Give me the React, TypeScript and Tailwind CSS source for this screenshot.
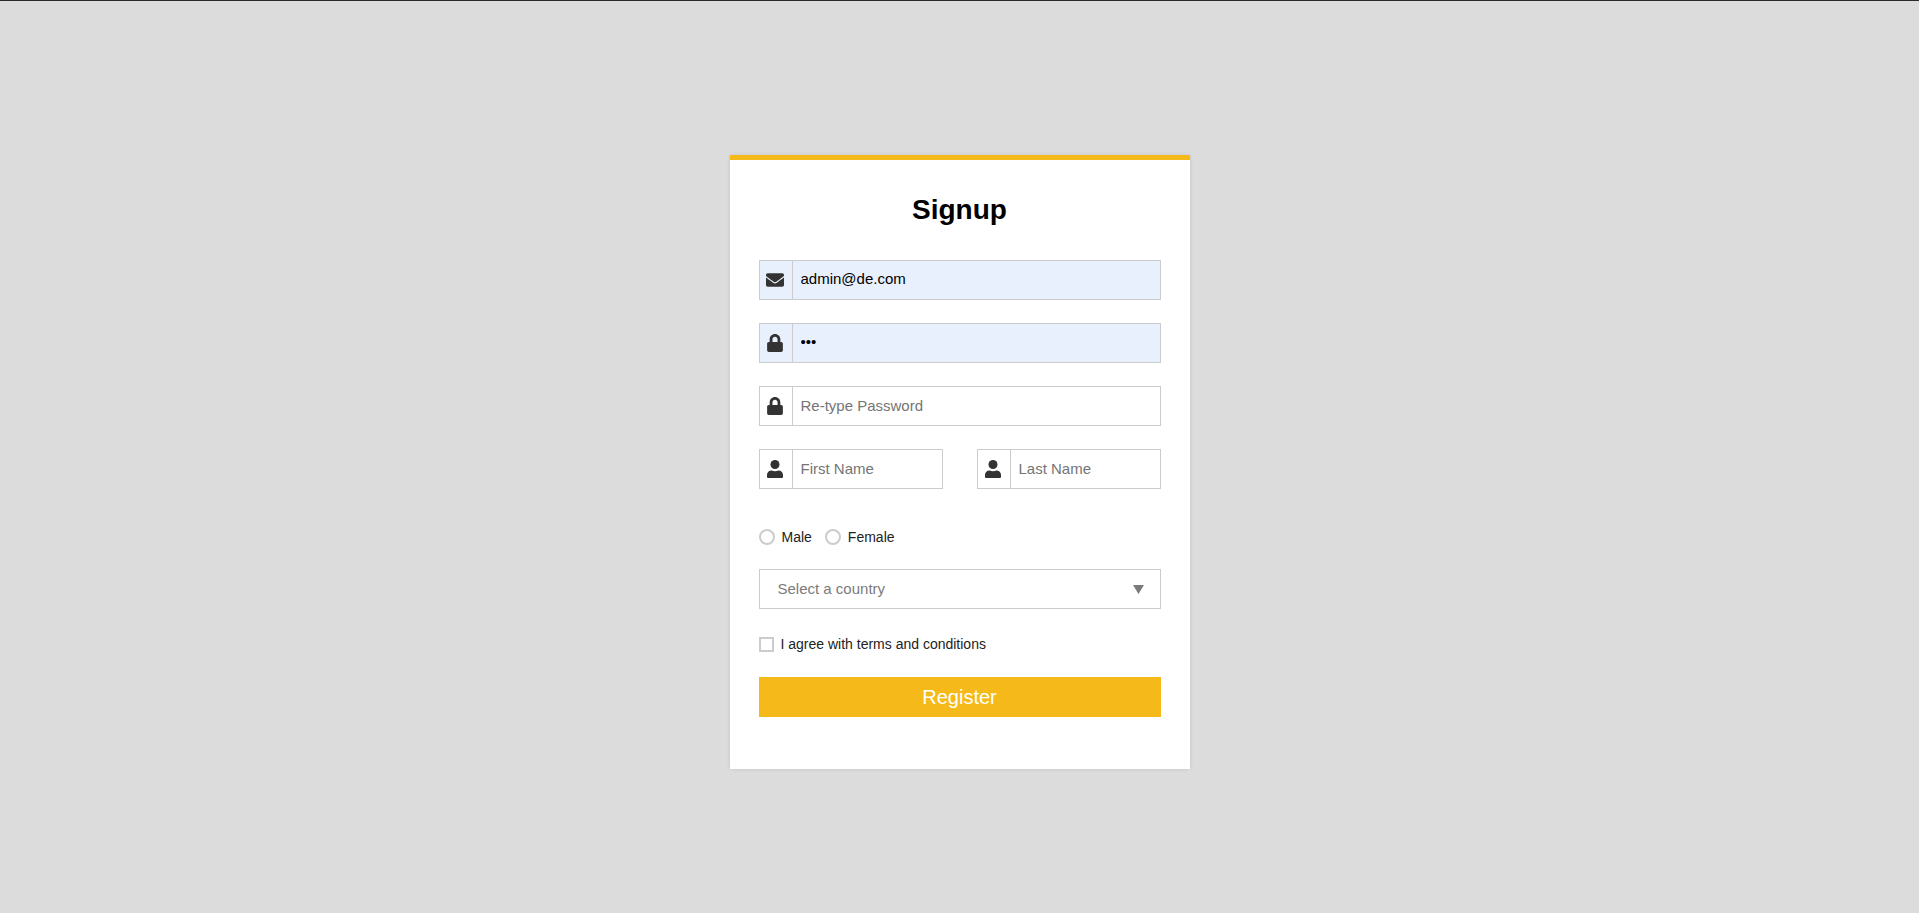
import type { InputHTMLAttributes, ReactNode } from "react";
import { FaEnvelope, FaLock } from "react-icons/fa";

function UserIcon() {
  return (
    <svg viewBox="0 0 16 18" className="h-[18px] w-4" fill="currentColor" aria-hidden="true">
      <circle cx="8" cy="4.5" r="4.5" />
      <path d="M4.600 10.400c1 .5 2.200.8 3.400.8s2.400-.3 3.400-.8c2.700 0 4.600 1.900 4.600 4.400v1.900c0 .8-.5 1.300-1.300 1.300H1.300C.5 18 0 17.500 0 16.700v-1.900c0-2.500 1.900-4.400 4.600-4.400z" />
    </svg>
  );
}

type FieldProps = InputHTMLAttributes<HTMLInputElement> & {
  label: string;
  icon: ReactNode;
  filled?: boolean;
};

function Field({ label, icon, filled = false, ...input }: FieldProps) {
  return (
    <label className={`flex h-10 min-w-0 border border-[#cccccc] ${filled ? "bg-[#e8f0fe]" : "bg-white"}`}>
      <span className="flex w-[33px] shrink-0 items-center justify-center border-r border-[#cccccc] pr-px text-[18px] text-[#333333]">
        {icon}
      </span>
      <input
        aria-label={label}
        className={`w-full min-w-0 bg-transparent px-2 text-[15px] text-black outline-none placeholder:text-[#757575] ${filled ? "pb-px" : "pt-px"}`}
        {...input}
      />
    </label>
  );
}

export default function App() {
  return (
    <main className="flex min-h-screen flex-col items-center border-t border-[#2b272b] bg-[#dcdcdc] px-4 pt-[154px] pb-10 font-['Liberation_Sans',Arial,sans-serif]">
      <form
        className="w-full max-w-[460px] border-t-[5px] border-[#f5ba1a] bg-white px-[29px] pt-8 pb-[52px] shadow-[0_0_4px_rgba(0,0,0,0.1)]"
        onSubmit={(event) => event.preventDefault()}
      >
        <h1 className="text-center text-[28px] leading-9 font-bold text-black">Signup</h1>

        <div className="mt-8 flex flex-col gap-[23px]">
          <Field label="Email" type="email" defaultValue="admin@de.com" icon={<FaEnvelope />} filled />
          <Field label="Password" type="password" defaultValue="123" icon={<FaLock />} filled />
          <Field label="Re-type Password" type="password" placeholder="Re-type Password" icon={<FaLock />} />
          <div className="grid grid-cols-2 gap-[34px]">
            <Field label="First Name" type="text" placeholder="First Name" icon={<UserIcon />} />
            <Field label="Last Name" type="text" placeholder="Last Name" icon={<UserIcon />} />
          </div>
        </div>

        <fieldset className="mt-10 flex h-4 items-center gap-[13px] text-[14px] leading-4 text-[#222222]">
          {["Male", "Female"].map((gender) => (
            <label key={gender} className="flex items-center gap-[7px]">
              <input
                type="radio"
                name="gender"
                className="size-4 appearance-none rounded-full border-2 border-[#cccccc] checked:bg-[#f5ba1a]"
              />
              <span className="pb-px">{gender}</span>
            </label>
          ))}
        </fieldset>

        <div className="mt-6 grid h-10 items-center border border-[#cccccc]">
          <select
            aria-label="Country"
            className="col-start-1 row-start-1 h-full w-full appearance-none bg-transparent px-[18px] pt-px text-[15px] text-[#7b7b7b] outline-none"
          >
            <option>Select a country</option>
          </select>
          <svg
            viewBox="0 0 11 9"
            className="pointer-events-none col-start-1 row-start-1 mr-4 h-[9px] w-[11px] justify-self-end"
            fill="#7b7b7b"
            aria-hidden="true"
          >
            <path d="M0 0h11L5.500 9z" />
          </svg>
        </div>

        <label className="mt-[27px] flex h-4 items-center gap-[7px] text-[14px] leading-4 text-[#222222]">
          <input
            type="checkbox"
            className="size-[15px] appearance-none border-2 border-[#cccccc] checked:bg-[#f5ba1a]"
          />
          I agree with terms and conditions
        </label>

        <button type="submit" className="mt-[25px] h-10 w-full bg-[#f5ba1a] text-[20px] text-white">
          Register
        </button>
      </form>
    </main>
  );
}
